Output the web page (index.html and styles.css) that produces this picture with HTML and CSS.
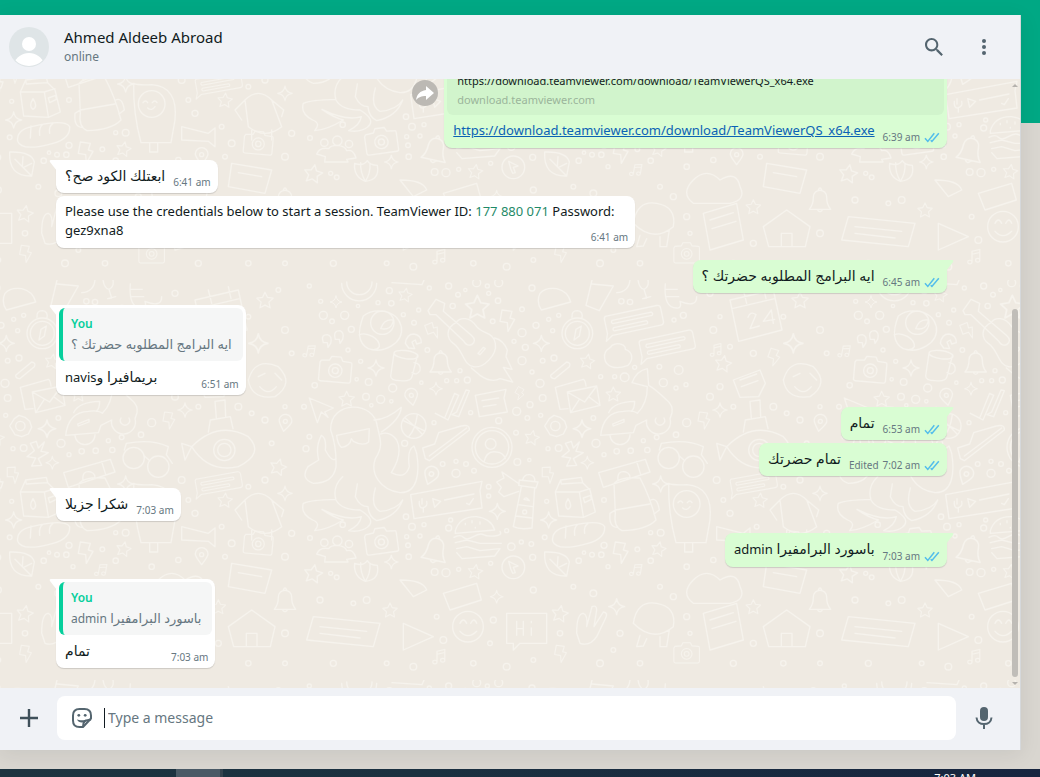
FILE: index.html
```html
<!DOCTYPE html>
<html lang="en">
<head>
<meta charset="utf-8">
<title>Ahmed Aldeeb Abroad</title>
<meta name="viewport" content="width=device-width, initial-scale=1">
<link rel="stylesheet" href="styles.css">
</head>
<body>
<svg class="defs" aria-hidden="true">
  <symbol id="checks" viewBox="0 0 16 11"><path d="M1 6.200 3.800 9.400 10.300 1.200M6.700 8.300l1.200 1.100L14.800 1.200" fill="none" stroke="#53bdeb" stroke-width="1.500"/></symbol>
  <symbol id="tail-in" viewBox="0 0 8 12"><path d="M8 0v11L1 2Q0 0 2 0z" fill="#fff"/></symbol>
  <symbol id="tail-out" viewBox="0 0 8 12"><path d="M0 0v11L7 2Q8 0 6 0z" fill="#d9fdd3"/></symbol>
</svg>
<div class="stage">
  <main class="app">
    <header class="header">
      <svg class="avatar" viewBox="0 0 40 40" aria-hidden="true">
        <defs><clipPath id="face"><circle cx="20" cy="20" r="19"/></clipPath></defs>
        <circle cx="20" cy="20" r="20" fill="#dfe5e7"/>
        <g fill="#fff" clip-path="url(#face)"><circle cx="20" cy="17" r="7"/><path d="M5 37c2-7 8-11 15-11s13 4 15 11v4H5z"/></g>
      </svg>
      <div class="contact">
        <h1 class="name">Ahmed Aldeeb Abroad</h1>
        <p class="status">online</p>
      </div>
      <button class="icon-button" aria-label="Search">
        <svg width="24" height="24" viewBox="0 0 24 24" fill="#54656f"><path d="M15.9 14.3H15l-.3-.3c1-1.1 1.6-2.7 1.6-4.3 0-3.7-3-6.7-6.7-6.7S3 6 3 9.700s3 6.700 6.700 6.700c1.600 0 3.200-.6 4.300-1.600l.3.3v.8l5.100 5.100 1.500-1.500-5-5.200zm-6.200 0c-2.600 0-4.600-2.100-4.600-4.600s2.100-4.600 4.600-4.600 4.600 2.100 4.600 4.600-2 4.600-4.600 4.600z"/></svg>
      </button>
      <button class="icon-button" aria-label="Menu">
        <svg width="24" height="24" viewBox="0 0 24 24" fill="#54656f"><circle cx="12" cy="6" r="2"/><circle cx="12" cy="12" r="2"/><circle cx="12" cy="18" r="2"/></svg>
      </button>
    </header>

    <section class="chat" aria-label="Messages">
      <svg class="wallpaper" aria-hidden="true">
        <defs>
          <path id="star" d="M0-26 8-9 27-6 13 7 17 26 0 17-17 26-13 7-27-6-8-9z"/>
          <path id="spark" d="M0-24Q3-3 24 0Q3 3 0 24Q-3 3-24 0Q-3-3 0-24z"/>
          <path id="bolt" d="M-14-30 16-26 10-6 24-2 4 34 2 8-20 4z"/>
          <path id="pin" d="M0 24C-12 8-19 0-19-8A19 19 0 0 1 19-8C19 0 12 8 0 24zM6-6A6 6 0 1 1-6-6A6 6 0 1 1 6-6z"/>
          <path id="camera" d="M-44-26-20-28-14-40H14L20-28 44-26Q48-26 48-20V30Q48 36 42 36H-42Q-48 36-48 30V-20zM20 2A20 20 0 1 1-20 2A20 20 0 1 1 20 2zM9 2A9 9 0 1 1-9 2A9 9 0 1 1 9 2z"/>
          <path id="bell" d="M-32 28Q-20 14-20-8C-20-36 20-36 20-8Q20 14 32 28zM-8 28Q0 42 8 28M-5-30Q0-42 5-30"/>
          <path id="note" d="M-10 18V-18L16-24V12M-10-8 16-14M-10 18A7 6 0 1 1-24 18A7 6 0 1 1-10 18zM16 12A7 6 0 1 1 2 12A7 6 0 1 1 16 12z"/>
          <path id="bubble" d="M-80-30H78Q88-30 88-20V20Q88 30 78 30H-70L-92 44-84 22V-22Q-84-30-76-30zM-62-14H58Q64-8 58-4H-62Q-68-8-62-14zM-62 8H38Q44 14 38 18H-62Q-68 14-62 8z"/>
          <pattern id="doodles" x="300" y="201" width="535" height="400" patternUnits="userSpaceOnUse" viewBox="0 0 1605 1200">
            <g id="tile" fill="none" stroke="#f6f3ed" stroke-width="4" stroke-linejoin="round" stroke-linecap="round">
              <path d="M125 10A52 52 0 0 0 230 10M140 6A37 37 0 0 0 216 6M276 8 366 14 372 0"/>
              <path d="M190 108C220 84 290 84 304 140C312 190 250 222 205 206C175 190 170 160 190 108zM282 128A35 35 0 1 1 212 128A35 35 0 1 1 282 128M178 164C200 155 240 175 238 200Q230 214 205 206Q182 195 178 164M242 146Q252 116 280 120Q276 152 242 146z"/>
              <path d="M282 220 272 288Q272 302 300 302 332 306 336 290L352 228M282 220A36 12 8 0 1 354 228A36 12 8 0 1 282 220zM342 248Q364 250 360 272 350 288 336 278"/>
              <path d="M384 92 408 58 434 70 430 94 514 166Q532 182 515 194 500 200 490 182L408 104 390 104zM468 128C480 110 510 110 530 140 550 164 580 155 586 190 592 225 550 266 520 260 490 256 490 210 460 190 440 176 435 145 468 128M534 220 550 202 556 206 540 224zM584 174Q610 180 622 210L618 230 636 268 610 262 638 306 600 296Q575 310 540 286L514 264"/>
              <path d="M720 40Q735 22 770 26 804 34 812 66L724 90Q708 66 720 40zM876 0 858 76 898 92 940 18 876 12M990 0Q986 36 950 38M1014 0Q1018 26 1032 28 1048 20 1044 0M1032 28 1040 54 1028 56 1052 50M1096 12Q1090 84 1130 84 1146 86 1140 64 1190 84 1190 50M1098 28H1132M1100 50H1136"/>
              <path d="M878 160A46 46 0 1 1 786 160A46 46 0 1 1 878 160M868 160A36 36 0 1 1 796 160A36 36 0 1 1 868 160M822 180 828 148 844 138 838 168zM816 112Q814 92 832 92 850 94 846 114"/>
              <path d="M914 236C910 205 932 208 936 196 956 184 978 196 976 208 1000 216 1000 240 984 256 948 270 918 262 914 236z"/>
              <path d="M752 286 800 246Q814 248 808 260L764 296Q752 296 752 286z"/>
              <path d="M766 322 850 298Q856 300 858 318M766 322 780 388 804 386M802 336 890 318 900 376 812 398zM802 336 854 366 890 318M812 398 838 358M900 376 868 352"/>
              <path d="M996 308Q1010 272 1042 266L1046 316Q1060 322 1100 360 1120 376 1116 398L1110 416A36 36 0 1 1 1040 420L1008 436 1000 458 902 466Q910 396 970 394 1000 390 1012 400 1042 370 1042 320zM990 464A30 30 0 1 1 930 464M1092 414A14 14 0 1 1 1068 414M926 398Q940 366 1004 364 1004 386 994 394M938 432 972 418V426L940 438z"/>
              <path d="M28 354 100 384 74 396 84 412 64 396 52 428zM68 180Q64 164 82 164 98 168 92 190L84 202 82 188 70 188zM104 168Q102 152 120 152 134 158 128 178L120 190 118 178 106 178zM316 190Q320 162 342 162 364 166 364 188L350 192 346 180 336 186 344 206 326 204z"/>
              <path d="M92 450C90 360 224 360 232 440 242 480 250 500 226 536 210 580 240 630 300 638 352 640 360 580 350 520L342 498Q320 510 328 560 316 600 274 578 310 520 290 480 270 452 242 462M110 466 208 446 206 486Q190 500 160 484L154 476Q150 500 124 502 112 490 110 466M92 450Q110 500 108 560 100 610 40 610 0 596 24 560L56 540Q46 500 64 466 80 474 76 510 96 548 108 536M222 420Q260 420 304 382 300 420 244 456M226 624Q210 680 240 694 290 690 308 660 290 710 230 722 206 710 204 680 180 680 166 650L172 612M128 590Q96 620 108 660 124 690 180 690 230 720 202 742 180 758 146 752 180 736 184 710 140 724 66 688 100 712 130 720 80 750 44 752 64 730 38 720 0 700 10 670 30 660 108 658"/>
              <path d="M378 438A36 36 0 1 1 304 438A36 36 0 1 1 378 438M310 422 372 452M326 470Q346 450 352 404M316 414Q346 440 366 462M406 400 434 414 464 340 476 346 444 420zM456 404 476 410 508 332 498 330 470 396zM526 346 618 328 612 354 622 396 538 410zM546 362 596 354M550 380 588 374"/>
              <path d="M368 504 376 536 388 542 508 450Q510 432 484 438L416 458 404 492zM388 528 500 444M636 502A60 60 0 1 1 516 502A60 60 0 1 1 636 502M626 502A50 50 0 1 1 526 502A50 50 0 1 1 626 502M588 492A16 16 0 1 1 556 492A16 16 0 1 1 588 492M552 546Q560 510 590 516 610 518 616 536"/>
              <path d="M734 438 748 416 762 406 780 412 794 424 800 442 790 462 770 470 750 464zM780 438A14 14 0 1 1 752 438A14 14 0 1 1 780 438M786 530 808 512 796 490 814 484 820 504 838 486 828 514 850 518 820 536 830 556 800 558 812 534z"/>
              <path d="M896 578 1036 538 1050 576 910 622zM1010 544 1022 584M954 602Q950 570 978 576 994 584 988 596M942 610Q960 590 1020 594 1050 650 1068 720 1040 750 966 752 940 740 946 700zM946 690 1050 672M946 690 930 700Q926 740 950 742M1052 660Q1072 650 1078 690L1062 702"/>
              <path d="M1106 610Q1118 616 1160 614 1240 620 1230 720L1218 788H1128Q1104 700 1106 610M1200 672A40 40 0 1 1 1120 672A40 40 0 1 1 1200 672M1134 668Q1142 658 1148 668M1162 668Q1170 658 1176 668M1148 684Q1160 694 1170 680M1154 788V816H1178V790"/>
              <path d="M1084 490Q1160 476 1210 500L1204 524 1222 550M1084 490 1078 510M1138 534A32 32 0 1 1 1074 534A32 32 0 1 1 1138 534M1212 560A32 32 0 1 1 1148 560A32 32 0 1 1 1212 560M1138 528 1152 540"/>
              <path d="M332 644 546 604 540 632 546 684 342 716zM358 664Q356 684 368 684 384 680 380 664M370 684V696M366 656V672M398 656 422 664 404 682zM434 660 522 642M500 670 508 674 520 656"/>
              <path d="M466 752Q480 708 530 710 574 716 584 750L466 760zM462 772Q480 762 490 772T520 770 550 764 584 768 600 754M466 788 500 780 540 790 604 790M470 806 500 800 540 812 600 806 584 828 486 836 470 818M496 730V734M516 722V728M540 726V732M526 742V744"/>
              <path d="M658 600 714 606 708 624 656 616zM668 600Q672 582 690 584 706 588 704 604M664 620 640 740Q660 750 696 744L704 624M654 674 698 680M646 708 696 714M658 612 606 576 612 594 590 606 604 622 596 636 612 650 656 634M672 658Q678 648 688 662zM680 696A6 6 0 1 1 668 696A6 6 0 1 1 680 696"/>
              <path d="M782 600 844 592 848 608 870 630 886 696 850 712 776 708 766 636zM766 636H838L870 626M838 636 850 710M782 600 784 612 848 608M804 656Q790 680 804 688 820 680 804 656M850 654 872 646 874 658 854 668z"/>
              <path d="M758 784Q754 750 800 740 900 716 914 740 916 776 864 790 770 816 758 784zM796 774 798 738M824 766Q820 740 836 732M854 760Q850 740 864 730M734 816Q800 814 808 846L800 888Q730 890 734 816M750 838 800 888M774 830 772 860M800 850 776 862M674 862A34 34 0 1 1 606 862A34 34 0 1 1 674 862M626 844 654 858 640 862 646 878 638 880 632 866z"/>
              <path d="M50 822Q60 800 86 806 90 796 112 796 136 798 140 812 160 806 168 834L140 838 144 846H74L76 830zM84 788A11 11 0 1 1 62 788A11 11 0 1 1 84 788M126 782A14 14 0 1 1 98 782A14 14 0 1 1 126 782M158 792A11 11 0 1 1 136 792A11 11 0 1 1 158 792M164 850Q190 860 202 842 210 856 232 856 240 900 196 904 160 890 164 850M182 848Q180 876 196 904 212 880 210 850"/>
              <path d="M1290 60 1420 30 1446 150 1316 184zM1296 86 1424 56M1330 30 1340 70M1390 20 1398 56M1344 112Q1350 92 1368 104L1350 146 1378 138M1420 130 1414 90 1390 124 1424 118"/>
              <path d="M1280 500Q1360 420 1450 470 1500 520 1420 560 1330 580 1280 500zM1410 510A32 32 0 1 1 1346 510A32 32 0 1 1 1410 510M1398 510A20 20 0 1 1 1358 510A20 20 0 1 1 1398 510M1330 456 1336 420 1396 410 1404 446M1354 414 1350 364 1380 360 1382 410M1280 500 1250 490 1260 540z"/>
              <path d="M1450 300Q1470 230 1540 260 1590 310 1530 350 1460 360 1450 300M1480 290 1500 280M1530 280 1550 300M1484 320Q1510 350 1534 320M1300 300 1380 270 1396 310 1376 350 1320 352zM1320 300 1370 282M1324 320 1374 302"/>
              <path d="M1250 740 1330 760 1350 744V800L1330 784 1250 780zM1440 660Q1480 620 1520 660L1550 740Q1500 780 1450 740zM1440 660 1410 690 1430 720M1520 660 1556 690 1550 710M1460 750V780M1520 750V780"/>
              <path d="M40 1010 240 1030 220 1100 20 1080zM60 1040 200 1054M60 1060 180 1074M310 1030 400 1070 310 1110zM550 1040A46 46 0 1 1 458 1040A46 46 0 1 1 550 1040M480 1030Q490 1010 500 1030M512 1030Q522 1010 530 1030M480 1054Q504 1080 530 1054M620 1000H740V1090H660L640 1110V1090H620zM650 1024V1066M650 1046H670M670 1024V1066M694 1044V1066M694 1024V1028"/>
              <path d="M830 1060Q830 1000 850 1000 864 1004 860 1040L876 980Q890 974 890 990L882 1040 910 996Q926 998 916 1016L890 1070Q870 1100 840 1090zM1000 1030Q1010 960 1070 970 1130 980 1120 1040 1060 1090 1000 1030M1020 1066 1010 1100 1030 1098 1040 1076M1080 1070V1100H1100L1108 1050M1210 1000 1310 970 1330 1080 1230 1110zM1230 1020 1300 998M1236 1046 1308 1024M1390 1040 1460 990 1530 1040 1516 1100H1406zM1444 1100V1060H1476V1100"/>
              <path d="M1180 900Q1220 860 1260 900 1310 870 1320 920 1340 960 1290 970H1180Q1140 940 1180 900zM300 900Q370 900 380 930L340 950zM430 940 530 910 544 960 450 990zM1400 850 1520 870 1500 940 1390 920zM1420 878 1490 890"/>
            </g>
          </pattern>
        </defs>
        <rect width="100%" height="100%" fill="url(#doodles)"/>
      </svg>

      <div class="row row--out">
        <button class="forward" aria-label="Forward"><svg width="26" height="26" viewBox="0 0 26 26" fill="#fff"><path d="M14 6l8 7-8 7v-4c-5 0-7 1-10 4 1-6 4-9 10-10z"/></svg></button>
        <article class="bubble bubble--out bubble--rich">
          <div class="preview">
            <p class="preview-title">https://download.teamviewer.com/download/TeamViewerQS_x64.exe</p>
            <p class="preview-host">download.teamviewer.com</p>
          </div>
          <div class="line">
            <p class="text"><a class="link" href="#">https://download.teamviewer.com/download/TeamViewerQS_x64.exe</a></p>
            <p class="meta">6:39 am <svg class="checks"><use href="#checks"/></svg></p>
          </div>
        </article>
      </div>

      <div class="row row--first">
        <article class="bubble bubble--tail-in">
          <svg class="tail"><use href="#tail-in"/></svg>
          <div class="line"><p class="text text--arabic" dir="rtl">ابعتلك الكود صح؟</p><p class="meta">6:41 am</p></div>
        </article>
      </div>
      <div class="row">
        <article class="bubble">
          <div class="line line--long"><p class="text">Please use the credentials below to start a session. TeamViewer ID: <span class="number">177 880 071</span> Password: gez9xna8</p><p class="meta">6:41 am</p></div>
        </article>
      </div>

      <div class="row row--out row--first">
        <article class="bubble bubble--out bubble--tail-out">
          <svg class="tail tail--out"><use href="#tail-out"/></svg>
          <div class="line"><p class="text text--arabic" dir="rtl">ايه البرامج المطلوبه حضرتك ؟</p><p class="meta">6:45 am <svg class="checks"><use href="#checks"/></svg></p></div>
        </article>
      </div>

      <div class="row row--first">
        <article class="bubble bubble--tail-in bubble--rich">
          <svg class="tail"><use href="#tail-in"/></svg>
          <blockquote class="quote"><p class="quote-name">You</p><p class="quote-text" dir="rtl">ايه البرامج المطلوبه حضرتك ؟</p></blockquote>
          <div class="line"><p class="text text--arabic" dir="rtl">بريمافيرا و<span class="latin">navis</span></p><p class="meta">6:51 am</p></div>
        </article>
      </div>

      <div class="row row--out row--first">
        <article class="bubble bubble--out bubble--tail-out">
          <svg class="tail tail--out"><use href="#tail-out"/></svg>
          <div class="line"><p class="text text--arabic" dir="rtl">تمام</p><p class="meta">6:53 am <svg class="checks"><use href="#checks"/></svg></p></div>
        </article>
      </div>
      <div class="row row--out">
        <article class="bubble bubble--out">
          <div class="line"><p class="text text--arabic" dir="rtl">تمام حضرتك</p><p class="meta"><span>Edited</span> 7:02 am <svg class="checks"><use href="#checks"/></svg></p></div>
        </article>
      </div>

      <div class="row row--first">
        <article class="bubble bubble--tail-in">
          <svg class="tail"><use href="#tail-in"/></svg>
          <div class="line"><p class="text text--arabic" dir="rtl">شكرا جزيلا</p><p class="meta">7:03 am</p></div>
        </article>
      </div>

      <div class="row row--out row--first">
        <article class="bubble bubble--out bubble--tail-out">
          <svg class="tail tail--out"><use href="#tail-out"/></svg>
          <div class="line"><p class="text text--arabic" dir="rtl">باسورد البرامفيرا <span class="latin">admin</span></p><p class="meta">7:03 am <svg class="checks"><use href="#checks"/></svg></p></div>
        </article>
      </div>

      <div class="row row--first">
        <article class="bubble bubble--tail-in bubble--rich">
          <svg class="tail"><use href="#tail-in"/></svg>
          <blockquote class="quote"><p class="quote-name">You</p><p class="quote-text" dir="rtl">باسورد البرامفيرا <span class="latin">admin</span></p></blockquote>
          <div class="line"><p class="text text--arabic" dir="rtl">تمام</p><p class="meta">7:03 am</p></div>
        </article>
      </div>

      <div class="scrollbar" aria-hidden="true">
        <svg width="6" height="4" viewBox="0 0 6 4"><path d="M3 0l3 3H0z" fill="#b5b2ad"/></svg>
        <div class="track"><div class="thumb"></div></div>
        <svg width="6" height="4" viewBox="0 0 6 4"><path d="M0 0h6L3 3z" fill="#b5b2ad"/></svg>
      </div>
    </section>

    <footer class="composer">
      <button class="icon-button" aria-label="Attach">
        <svg width="24" height="24" viewBox="0 0 24 24" fill="none" stroke="#3f505a" stroke-width="2.400"><path d="M12 3v18M3 12h18"/></svg>
      </button>
      <div class="field">
        <button class="icon-button icon-button--small" aria-label="Stickers">
          <svg width="24" height="24" viewBox="0 0 24 24" fill="none" stroke="#54656f" stroke-width="2"><path d="M21 12.500V9.500c0-4-2.500-6.500-6.500-6.500h-5C5.500 3 3 5.500 3 9.500v5C3 18.500 5.500 21 9.500 21H13l8-8.500z" stroke-linejoin="round"/><path d="M13 21c0-3 .5-4.500 1.500-5.500s3-1.500 6.500-2"/><path d="M7 13.300c1 .7 3 1 5 1s3.500-.3 4.500-1c-.3 1.700-2.500 2.500-3.500 3.200-2.500.5-5.200-.7-6-3.200z" fill="#54656f" stroke="none"/><circle cx="8.800" cy="9.300" r="1.400" fill="#54656f" stroke="none"/><circle cx="15.200" cy="9.300" r="1.400" fill="#54656f" stroke="none"/></svg>
        </button>
        <span class="caret"></span>
        <input class="input" type="text" placeholder="Type a message" aria-label="Type a message">
      </div>
      <button class="icon-button" aria-label="Voice message">
        <svg width="24" height="24" viewBox="0 0 24 24"><rect x="8" y="1" width="8" height="14" rx="4" fill="#54656f"/><path d="M4.500 11.500c.3 4.300 3.500 6.600 7.500 6.600s7.200-2.300 7.500-6.600M12 18v5" fill="none" stroke="#54656f" stroke-width="2"/></svg>
      </button>
    </footer>
  </main>
</div>
<div class="taskbar"><span class="task"></span><time class="clock">7:03 AM</time></div>
<script src="wallpaper.js"></script>
</body>
</html>
```

FILE: styles.css
```css
* { box-sizing: border-box; }
body, h1, p, blockquote { margin: 0; }
body {
  display: flex;
  flex-direction: column;
  height: 100vh;
  font-family: "Noto Sans", "DejaVu Sans", sans-serif;
  font-size: 13px;
  color: #111b21;
  background: linear-gradient(#00a884 123px, #d9d6d0 123px);
}
button { border: 0; padding: 0; background: none; }
svg { display: block; }
.defs { position: absolute; width: 0; height: 0; }

.stage { flex: 1; min-height: 0; display: flex; padding: 15px 19px 19px 0; }
.app {
  flex: 1;
  min-width: 0;
  display: flex;
  flex-direction: column;
  background: #efeae2;
  border-right: 1px solid #d5d8db;
  box-shadow: 0 4px 20px rgba(11, 20, 26, 0.08);
}

.header {
  display: flex;
  align-items: center;
  height: 64px;
  padding: 0 16px 0 9px;
  background: #f0f2f6;
}
.avatar { width: 40px; height: 40px; }
.contact { flex: 1; padding: 0 0 2px 15px; }
.name { font-size: 15px; font-weight: 400; line-height: 21px; }
.status { font-size: 12px; line-height: 18px; color: #667781; }
.icon-button { display: flex; align-items: center; justify-content: center; width: 40px; height: 40px; }
.header .icon-button + .icon-button { margin-left: 10px; }

.chat {
  position: relative;
  flex: 1;
  min-height: 0;
  display: flex;
  flex-direction: column;
  justify-content: flex-end;
  padding: 0 73px 20px 56px;
  overflow: hidden;
}
.wallpaper { position: absolute; inset: 0; width: 100%; height: 100%; }
.row { position: relative; flex: none; display: flex; align-items: center; margin-top: 3px; }
.row--out { justify-content: flex-end; }
.row--first { margin-top: 12px; }

.bubble {
  position: relative;
  max-width: 65%;
  border-radius: 8px;
  background: #fff;
  box-shadow: 0 1px 1px rgba(11, 20, 26, 0.15);
}
.bubble--out { background: #d9fdd3; }
.bubble--rich { padding-top: 3px; }
.bubble--tail-in { border-top-left-radius: 0; }
.bubble--tail-out { border-top-right-radius: 0; }
.tail { position: absolute; top: 0; left: -7px; width: 8px; height: 12px; }
.tail--out { left: auto; right: -7px; }
.line { display: flex; align-items: flex-end; justify-content: space-between; gap: 8px; padding: 0 7px 0 9px; }
.text { padding: 6px 0 8px; font-size: 13px; line-height: 19px; }
.text--arabic { font-size: 14px; }
.text--arabic .latin { font-size: 13px; }
.line--long { display: grid; }
.line--long > * { grid-area: 1 / 1; }
.line--long .meta { justify-self: end; align-self: end; }
.meta {
  display: flex;
  align-items: center;
  gap: 4px;
  padding-bottom: 3px;
  font-size: 10px;
  line-height: 15px;
  color: #667781;
  white-space: nowrap;
}
.checks { width: 16px; height: 11px; }
.number { color: #1f8a68; }
.link { color: #0b62b5; }

.preview { margin: 0 3px; padding: 30px 10px 6px; border-radius: 6px; background: #d1f4cc; }
.preview-title { font-size: 11px; line-height: 19px; }
.preview-host { font-size: 11px; line-height: 19px; color: #9bb59b; }
.forward { width: 26px; height: 26px; margin-right: 6px; border-radius: 50%; background: #bcb9b4; }

.quote {
  margin: 0 3px;
  padding: 5px 11px 6px 8px;
  border-left: 4px solid #06cf9c;
  border-radius: 6px;
  background: #f5f6f6;
}
.quote-name { font-size: 12px; font-weight: 600; line-height: 21px; color: #06cf9c; }
.quote-text { font-size: 13px; line-height: 21px; color: #667781; text-align: left; }
.quote-text .latin { font-size: 12px; }

.scrollbar {
  position: absolute;
  top: 5px;
  right: 2px;
  bottom: 2px;
  display: flex;
  flex-direction: column;
  align-items: center;
  gap: 5px;
  width: 6px;
}
.track { flex: 1; display: flex; align-items: flex-end; width: 100%; }
.thumb { width: 6px; height: 63%; border-radius: 3px; background: #c0bdb8; }

.composer { display: flex; align-items: center; height: 62px; padding: 0 16px 2px 9px; background: #f0f2f6; }
.field {
  flex: 1;
  min-width: 0;
  display: flex;
  align-items: center;
  height: 44px;
  margin: 0 8px;
  padding-left: 12px;
  border-radius: 8px;
  background: #fff;
}
.icon-button--small { width: 26px; }
.caret { width: 1px; height: 20px; margin-left: 9px; background: #111b21; }
.input {
  flex: 1;
  min-width: 0;
  border: 0;
  outline: 0;
  padding: 0 3px 2px;
  background: none;
  font: 14px "Noto Sans", sans-serif;
}
.input::placeholder { color: #667781; opacity: 1; }

.taskbar {
  display: flex;
  justify-content: space-between;
  height: 8px;
  padding: 0 64px 0 176px;
  overflow: hidden;
  background: linear-gradient(90deg, #1d3440, #1b3140 40%, #17253f);
}
.task { width: 47px; border-right: 3px solid #34434e; background: #4a5a66; }
.clock { padding-top: 1px; font-size: 11px; line-height: 15px; color: #fff; }
```

FILE: wallpaper.js
```js
// Scatters the small repeated doodles over the wallpaper tile.
const NS = "http://www.w3.org/2000/svg";
const tile = document.getElementById("tile");

// name: [x, y, rotation, scale]
const shapes = {
  star: [[316, 44, 10, 0.75], [532, 80, 0, 1.3], [862, 243, 10, 0.8], [140, 356, 0, 0.85], [940, 342, 0, 0.8],
    [696, 472, 12, 0.8], [1076, 806, 12, 0.8], [526, 874, 8, 0.8], [40, 880, 10, 1], [1270, 250, 10, 0.9],
    [1500, 60, 0, 0.9], [1540, 560, 15, 0.9], [1380, 660, 5, 0.8], [270, 990, 0, 0.8], [780, 1000, 10, 0.9], [1360, 980, 0, 0.8]],
  spark: [[108, 66, 0, 0.75], [228, 264, 0, 1], [724, 190, 0, 1], [408, 326, 0, 0.8], [846, 446, 0, 1.1],
    [862, 548, 0, 0.8], [592, 694, 0, 1], [746, 720, 0, 1], [1082, 612, 0, 1], [274, 846, 0, 0.85], [1480, 190, 0, 1.2],
    [1260, 390, 0, 0.9], [1560, 640, 0, 0.9], [950, 980, 0, 1], [590, 950, 0, 0.8]],
  bolt: [[396, 152, -30, 0.8], [620, 120, 0, 1], [658, 340, 20, 0.6], [742, 584, -10, 0.8], [960, 816, 0, 1],
    [1420, 230, 10, 0.8], [1210, 420, 0, 0.8], [780, 1120, 0, 0.8]],
  pin: [[335, 352, -10, 1], [392, 588, 20, 1.1], [1310, 830, 0, 1], [1560, 430, 10, 1]],
  camera: [[106, 270, 5, 1], [244, 784, -8, 1], [1480, 790, 5, 0.9], [1160, 1120, 0, 0.8]],
  bell: [[422, 248, 0, 1], [406, 808, 12, 1.15], [1560, 960, 0, 1]],
  note: [[30, 214, 10, 0.8], [1010, 870, 10, 0.8], [1250, 210, 0, 0.8], [420, 1130, 0, 0.9]],
  bubble: [[1000, 122, -12, 1], [1100, 194, -12, 0.95], [1360, 610, -10, 0.8]]
};

for (const [name, places] of Object.entries(shapes)) {
  for (const [x, y, angle, scale] of places) {
    const use = document.createElementNS(NS, "use");
    use.setAttribute("href", "#" + name);
    use.setAttribute("transform", `translate(${x} ${y}) rotate(${angle}) scale(${scale})`);
    tile.append(use);
  }
}

// x, y, radius
const rings = [
  [28, 18, 6], [62, 64, 6], [70, 106, 12], [96, 124, 7], [134, 106, 12], [154, 148, 9], [174, 78, 5], [234, 68, 6],
  [268, 32, 9], [274, 70, 8], [310, 104, 6], [342, 128, 7], [356, 90, 6], [388, 24, 6], [446, 18, 9], [474, 44, 7],
  [496, 30, 5], [530, 8, 12], [562, 18, 6], [596, 8, 12], [566, 40, 6], [594, 62, 8], [458, 78, 8], [578, 124, 7],
  [666, 88, 7], [696, 24, 9], [708, 136, 9], [746, 118, 6], [776, 106, 6], [758, 152, 6], [666, 158, 12], [642, 184, 6],
  [676, 202, 9], [666, 242, 12], [728, 242, 7], [762, 234, 9], [696, 276, 6], [720, 310, 12], [728, 354, 10],
  [690, 374, 9], [650, 394, 12], [682, 414, 7], [722, 406, 6], [596, 422, 9], [512, 398, 6], [182, 244, 6], [144, 210, 6],
  [170, 298, 5], [206, 306, 10], [278, 324, 12], [198, 350, 10], [242, 358, 12], [274, 364, 5], [214, 376, 5],
  [364, 308, 5], [440, 302, 6], [470, 302, 6], [502, 300, 9], [480, 272, 6], [382, 210, 7], [44, 316, 8], [12, 380, 7],
  [28, 470, 7], [18, 506, 9], [314, 490, 9], [402, 428, 6], [428, 552, 7], [468, 544, 6], [498, 552, 7], [522, 572, 7],
  [468, 580, 12], [648, 458, 7], [652, 546, 10], [688, 540, 5], [744, 506, 6], [776, 504, 10], [888, 490, 12],
  [912, 524, 6], [950, 514, 8], [992, 512, 8], [1042, 510, 8], [1030, 482, 6], [1070, 472, 7], [1128, 464, 8],
  [1160, 428, 12], [880, 414, 7], [902, 290, 6], [944, 290, 6], [974, 292, 13], [1090, 308, 12], [1136, 270, 13],
  [1128, 324, 6], [1158, 314, 6], [1004, 262, 6], [1078, 260, 7], [964, 64, 8], [990, 66, 8], [1150, 106, 9],
  [1122, 120, 6], [566, 620, 7], [566, 648, 6], [740, 664, 6], [912, 660, 7], [318, 710, 8], [336, 740, 10],
  [372, 734, 6], [320, 770, 6], [360, 768, 6], [324, 796, 7], [326, 830, 8], [446, 744, 9], [452, 720, 6],
  [128, 734, 8], [30, 774, 7], [620, 752, 6], [634, 800, 11], [664, 786, 6], [694, 792, 7], [698, 832, 9],
  [734, 772, 7], [836, 842, 8], [876, 824, 7], [904, 824, 8], [852, 818, 5], [912, 796, 9], [924, 860, 6],
  [1052, 842, 8], [1082, 758, 10], [1052, 758, 6], [1012, 808, 7], [404, 876, 10], [438, 878, 12], [476, 868, 6],
  [572, 850, 6], [92, 880, 6], [110, 892, 7], [1230, 40, 9], [1260, 110, 6], [1240, 150, 10], [1260, 320, 9],
  [1290, 200, 7], [1360, 220, 9], [1560, 150, 10], [1580, 220, 7], [1450, 110, 7], [1540, 30, 7], [1420, 380, 10],
  [1460, 400, 7], [1500, 420, 9], [1520, 490, 7], [1300, 380, 7], [1230, 350, 10], [1560, 380, 6], [1250, 600, 10],
  [1270, 660, 7], [1290, 700, 9], [1450, 620, 7], [1500, 600, 9], [1580, 760, 9], [1370, 740, 7], [1400, 790, 10],
  [1380, 830, 7], [1560, 830, 10], [1240, 840, 8], [1160, 860, 8], [200, 960, 10], [160, 970, 7], [60, 960, 9],
  [410, 1010, 7], [430, 1080, 10], [580, 1020, 9], [570, 1090, 7], [780, 1060, 8], [960, 1060, 9], [940, 1110, 7],
  [1160, 1010, 9], [1170, 1060, 6], [1360, 1090, 9], [1560, 1060, 10], [700, 930, 9], [820, 920, 7], [880, 940, 10],
  [1080, 920, 7], [1120, 950, 9], [100, 1150, 9], [260, 1150, 7], [340, 1160, 10], [520, 1150, 8], [620, 1160, 10],
  [700, 1140, 7], [900, 1150, 10], [1020, 1150, 8], [1300, 1150, 9], [1450, 1150, 8], [1560, 1150, 7]
];

for (const [x, y, r] of rings) {
  const ring = document.createElementNS(NS, "circle");
  ring.setAttribute("cx", x);
  ring.setAttribute("cy", y);
  ring.setAttribute("r", r);
  tile.append(ring);
}
```
